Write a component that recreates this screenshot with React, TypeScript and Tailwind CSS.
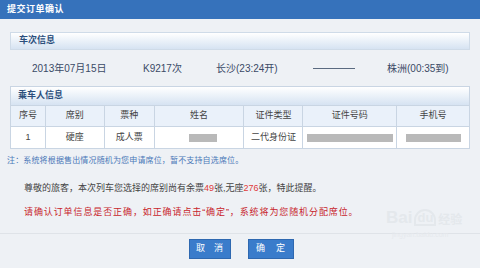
import React from "react";

const cols = [36, 59, 50, 90, 59, 94, 73];
const heads = ["序号", "席别", "票种", "姓名", "证件类型", "证件号码", "手机号"];

function Cell({ w, children, last }: { w: number; children?: React.ReactNode; last?: boolean }) {
  return (
    <div
      style={{ width: w }}
      className={`flex items-center justify-center h-full ${last ? "" : "border-r border-[#c9d5e3]"}`}
    >
      {children}
    </div>
  );
}

function Blank({ w }: { w: number }) {
  return <div style={{ width: w }} className="h-[8px] bg-[#b9b9b9]" />;
}

export default function App() {
  return (
    <div
      className="relative w-[480px] h-[268px] overflow-hidden bg-[#eef1f5] text-[#444]"
      style={{ fontFamily: '"Liberation Sans", "Noto Sans CJK SC", sans-serif' }}
    >
      <div className="h-[19px] bg-[#3672bb] flex items-center pl-[7px] text-white text-[9px] font-bold tracking-[0.5px]">
        提交订单确认
      </div>

      <div className="px-[10px] pt-[13px]">
        <div className="h-[18px] border border-[#cfdbe8] bg-gradient-to-b from-[#ffffff] to-[#d6e3f2] flex items-center pl-[8px] text-[9px] font-bold text-[#2b4e7c]">
          车次信息
        </div>
        <div className="h-[36px] flex items-center pl-[22px] text-[10px] text-[#3a4a66]">
          <div className="w-[111px]">2013年07月15日</div>
          <div className="w-[73px]">K9217次</div>
          <div className="w-[97px]">长沙(23:24开)</div>
          <div className="w-[74px] flex items-center">
            <div className="w-[42px] h-px bg-[#5a6a80]" />
          </div>
          <div>株洲(00:35到)</div>
        </div>

        <div className="border border-[#c9d5e3] bg-white">
          <div className="h-[19px] border-b border-[#c9d5e3] bg-gradient-to-b from-[#ffffff] to-[#d6e3f2] flex items-center pl-[7px] text-[9px] font-bold text-[#2b4e7c]">
            乘车人信息
          </div>
          <div className="h-[21px] flex bg-[#eaf1fa] border-b border-[#c9d5e3] text-[9px] text-[#444]">
            {heads.map((h, i) => (
              <Cell key={h} w={cols[i] - (i === 0 ? 1 : 0) - (i === 6 ? 1 : 0)} last={i === 6}>
                {h}
              </Cell>
            ))}
          </div>
          <div className="h-[21px] flex text-[9px] text-[#444]">
            <Cell w={35}>1</Cell>
            <Cell w={59}>硬座</Cell>
            <Cell w={50}>成人票</Cell>
            <Cell w={90}>
              <div className="pl-[8px]">
                <Blank w={28} />
              </div>
            </Cell>
            <Cell w={59}>二代身份证</Cell>
            <Cell w={94}>
              <Blank w={86} />
            </Cell>
            <Cell w={72} last>
              <Blank w={55} />
            </Cell>
          </div>
        </div>
      </div>

      <div className="h-[23px] flex items-center pl-[7px] text-[8px] tracking-[0.15px] text-[#4a78b8]">
        注：系统将根据售出情况随机为您申请席位，暂不支持自选席位。
      </div>

      <div className="pl-[24px] pt-[10px] text-[9px]">
        <div className="h-[13px] flex items-center text-[#444]">
          <span>
            尊敬的旅客，本次列车您选择的席别尚有余票<span className="text-[#e03a3a]">49</span>张,无座
            <span className="text-[#e03a3a]">276</span>张，特此提醒。
          </span>
        </div>
        <div className="h-[13px] mt-[11px] flex items-center text-[#c8252c] tracking-[0.9px] whitespace-nowrap">
          请确认订单信息是否正确，如正确请点击“确定”，系统将为您随机分配席位。
        </div>
      </div>

      <div className="mt-[14px] h-px bg-[#dfe3e8]" />

      <div className="pt-[5px] flex justify-center gap-[17px] pl-[2px]">
        <button className="w-[42px] h-[20px] bg-[#3a7ccb] border border-[#2e68b0] text-white text-[9px] flex items-center justify-center gap-[9px] whitespace-nowrap">
          <span>取</span>
          <span>消</span>
        </button>
        <button className="w-[46px] h-[20px] bg-[#3a7ccb] border border-[#2e68b0] text-white text-[9px] flex items-center justify-center gap-[11px] whitespace-nowrap">
          <span>确</span>
          <span>定</span>
        </button>
      </div>

      <div className="absolute left-[386px] top-[209px] flex items-end gap-[2px] text-[#e4e8ec] select-none">
        <span className="text-[17px] font-bold leading-none">Bai</span>
        <span className="text-[13px] font-bold leading-none border-[2px] border-[#e4e8ec] rounded-t-full px-[1px]">du</span>
        <span className="text-[12px] font-bold leading-none">经验</span>
      </div>
      <div className="absolute left-[392px] top-[230px] text-[7px] text-[#e6e9ed] select-none">
        jingyan.baidu.com
      </div>
    </div>
  );
}
